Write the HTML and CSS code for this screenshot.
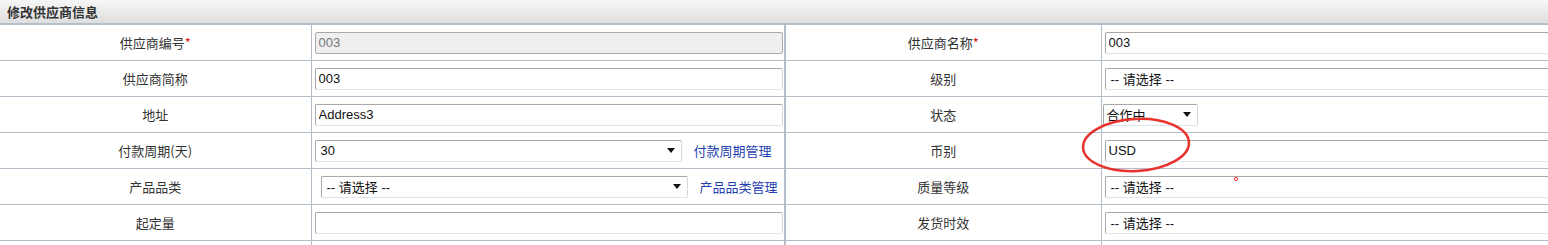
FILE: index.html
```html
<!doctype html>
<html>
  <head>
    <meta charset="utf-8">
    <title>修改供应商信息</title>
    <link rel="stylesheet" href="styles.css">
  </head>
  <body>
    <div class='panel'>
      <div class='panel-title'>修改供应商信息</div>

      <table class='form-table'>
        <colgroup>
          <col class='col-label'>
          <col class='col-field'>
          <col class='col-label2'>
          <col class='col-field2'>
        </colgroup>
        <tr>
          <td class='label'>供应商编号<span class='req'>*</span></td>
          <td class='field'><input class='text' type='text' value='003' disabled></td>
          <td class='label mid'>供应商名称<span class='req'>*</span></td>
          <td class='field'><input class='text' type='text' value='003'></td>
        </tr>
        <tr>
          <td class='label'>供应商简称</td>
          <td class='field'><input class='text' type='text' value='003'></td>
          <td class='label mid'>级别</td>
          <td class='field'><div class='select wide'><span>-- 请选择 --</span></div></td>
        </tr>
        <tr>
          <td class='label'>地址</td>
          <td class='field'><input class='text' type='text' value='Address3'></td>
          <td class='label mid'>状态</td>
          <td class='field tight'><div class='select small'><span>合作中</span><i class='arrow'></i></div></td>
        </tr>
        <tr>
          <td class='label'>付款周期(天)</td>
          <td class='field'>
            <div class='with-link'>
              <div class='select period'><span>30</span><i class='arrow'></i></div>
              <a class='manage' href='#'>付款周期管理</a>
            </div>
          </td>
          <td class='label mid'>币别</td>
          <td class='field'><input class='text' type='text' value='USD'></td>
        </tr>
        <tr>
          <td class='label'>产品品类</td>
          <td class='field'>
            <div class='with-link shifted'>
              <div class='select period'><span>-- 请选择 --</span><i class='arrow'></i></div>
              <a class='manage' href='#'>产品品类管理</a>
            </div>
          </td>
          <td class='label mid'>质量等级</td>
          <td class='field'><div class='select wide'><span>-- 请选择 --</span></div></td>
        </tr>
        <tr>
          <td class='label'>起定量</td>
          <td class='field'><input class='text' type='text' value=''></td>
          <td class='label mid'>发货时效</td>
          <td class='field'><div class='select wide'><span>-- 请选择 --</span></div></td>
        </tr>
        <tr>
          <td class='label'>&nbsp;</td>
          <td class='field'></td>
          <td class='label mid'></td>
          <td class='field'></td>
        </tr>
      </table>

      <!-- hand-drawn annotation on top of the form -->
      <svg class='markup' width='200' height='100' viewBox='0 0 200 100'>
        <ellipse cx='56' cy='45' rx='53' ry='26' fill='none' stroke='#e8322e' stroke-width='2.5' transform='rotate(-3 56 45)' />
        <circle cx='156' cy='79' r='1.6' fill='none' stroke='#e8322e' stroke-width='1' />
      </svg>
    </div>
  </body>
</html>
```

FILE: styles.css
```css
:root {
  --text-color: #333;
  --line-color: #b5bec8;
  --input-border: #a9a9a9;
  --link-color: #1f3fae;
}

body {
  margin: 0;
  overflow: hidden;
  background: #fff;
  font-family: "Noto Sans CJK SC", "Liberation Sans", sans-serif;
  font-size: 13px;
  color: var(--text-color);
}

.panel {
  position: relative;
  width: 1600px;
}

.panel-title {
  height: 23px;
  line-height: 23px;
  padding-left: 7px;
  font-weight: bold;
  color: #333;
  background: linear-gradient(#f6f6f6, #dedede);
  border-bottom: 2px solid #b3bfcb;
}

.form-table {
  width: 1600px;
  table-layout: fixed;
  border-collapse: collapse;
}

.col-label { width: 311px; }
.col-field { width: 474px; }
.col-label2 { width: 316px; }

.form-table td {
  height: 35px;
  padding: 0;
  border-bottom: 1px solid var(--line-color);
  border-right: 1px solid var(--line-color);
}

.form-table tr:first-child td {
  height: 35px;
}

.form-table td.label {
  text-align: center;
}

.form-table td.mid {
  border-left: 2px solid var(--line-color);
}

.req {
  color: #e0181c;
}

.field {
  padding: 0 3px;
}

.form-table td.field {
  padding: 0 3px;
}

.text {
  box-sizing: border-box;
  display: block;
  width: 468px;
  height: 22px;
  margin: 0;
  padding: 0 3px;
  font-family: "Liberation Sans", "Noto Sans CJK SC", sans-serif;
  font-size: 13px;
  color: #111;
  background: #fff;
  border: 1px solid var(--input-border);
  border-bottom-color: #dfe5ec;
  border-right-color: #d5d9de;
  border-radius: 2px;
  outline: none;
}

.text:disabled {
  color: #777;
  background: #efefef;
  border-color: #a9a9a9;
}

.select {
  box-sizing: border-box;
  display: flex;
  align-items: center;
  justify-content: space-between;
  height: 22px;
  padding: 0 6px 0 5px;
  font-family: "Liberation Sans", "Noto Sans CJK SC", sans-serif;
  color: #111;
  background: #fff;
  border: 1px solid var(--input-border);
  border-bottom-color: #dfe5ec;
  border-right-color: #d5d9de;
  border-radius: 2px;
}

.select.wide {
  width: 468px;
}

.select.small {
  width: 95px;
  margin-left: -2px;
  padding-left: 3px;
}

.select.period {
  width: 367px;
}

.arrow {
  width: 0;
  height: 0;
  border-left: 4px solid transparent;
  border-right: 4px solid transparent;
  border-top: 5px solid #111;
}

.with-link {
  display: flex;
  align-items: center;
  gap: 12px;
}

.with-link.shifted {
  padding-left: 6px;
}

.manage {
  color: var(--link-color);
  text-decoration: none;
}

.markup {
  position: absolute;
  left: 1080px;
  top: 100px;
}
```
